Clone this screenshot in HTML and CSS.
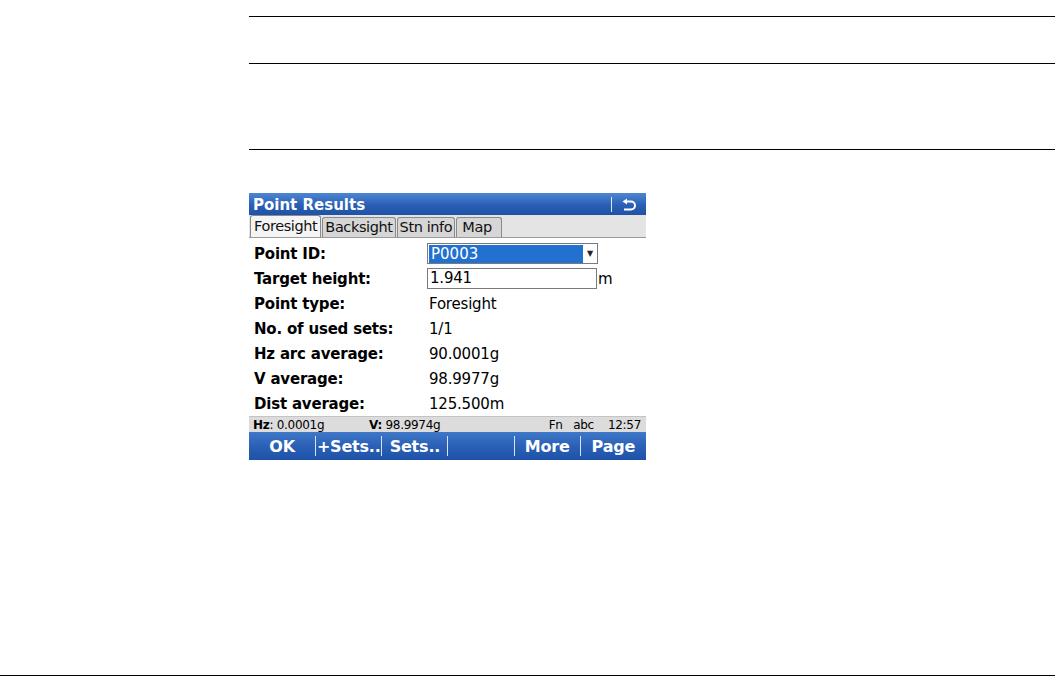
FILE: index.html
```html
<!DOCTYPE html>
<html>
<head>
<meta charset="utf-8">
<link rel="stylesheet" href="styles.css">
</head>
<body>
<div class="page">
  <div class="rule rule-a"></div>
  <div class="rule rule-b"></div>
  <div class="rule rule-c"></div>
  <div class="screen">
    <div class="titlebar">
      <span class="title">Point Results</span>
      <span class="tsep"></span>
      <svg class="back" width="16" height="14" viewBox="0 0 16 14">
        <path d="M5 3.5 H10 A4 4 0 0 1 10 11.5 H3" fill="none" stroke="#fff" stroke-width="2"/>
        <path d="M1.5 3.5 L6 0.5 L6 6.5 Z" fill="#fff"/>
      </svg>
    </div>
    <div class="tabs">
      <div class="tab active">Foresight</div>
      <div class="tab">Backsight</div>
      <div class="tab">Stn info</div>
      <div class="tab tab-map">Map</div>
    </div>
    <div class="content">
      <div class="row"><span class="lbl">Point ID:</span>
        <div class="select"><span class="selval">P0003</span><span class="arrow">&#9660;</span></div></div>
      <div class="row"><span class="lbl">Target height:</span>
        <div class="input">1.941</div><span class="unit">m</span></div>
      <div class="row"><span class="lbl">Point type:</span><span class="val">Foresight</span></div>
      <div class="row"><span class="lbl">No. of used sets:</span><span class="val">1/1</span></div>
      <div class="row"><span class="lbl">Hz arc average:</span><span class="val">90.0001g</span></div>
      <div class="row"><span class="lbl">V average:</span><span class="val">98.9977g</span></div>
      <div class="row"><span class="lbl">Dist average:</span><span class="val">125.500m</span></div>
    </div>
    <div class="status">
      <span class="st-hz"><b>Hz</b>: 0.0001g</span>
      <span class="st-v"><b>V:</b> 98.9974g</span>
      <span class="st-right">Fn&nbsp;&nbsp; abc&nbsp;&nbsp;&nbsp; 12:57</span>
    </div>
    <div class="softkeys">
      <div class="key">OK</div>
      <div class="key">+Sets..</div>
      <div class="key">Sets..</div>
      <div class="key"></div>
      <div class="key">More</div>
      <div class="key">Page</div>
    </div>
  </div>
  <div class="footer-rule"></div>
</div>
</body>
</html>
```
FILE: styles.css
```css
html, body {
  margin: 0;
  padding: 0;
  background: #fff;
}
.page {
  height: 676px;
  display: flex;
  flex-direction: column;
  font-family: "DejaVu Sans", sans-serif;
}
.rule {
  margin-left: 249px;
  height: 1px;
  background: #000;
}
.rule-a { margin-top: 16px; }
.rule-b { margin-top: 46px; }
.rule-c { margin-top: 85px; }
.screen {
  margin-top: 43px;
  margin-left: 249px;
  width: 397px;
  display: flex;
  flex-direction: column;
}
.titlebar {
  height: 22px;
  background: linear-gradient(#4f86d3, #2a5fb4 55%, #1f52a6);
  display: flex;
  align-items: center;
  padding-left: 4px;
  padding-top: 1px;
  box-sizing: border-box;
  color: #fff;
}
.title {
  font-weight: bold;
  font-size: 15px;
  letter-spacing: 0;
  flex: 1;
}
.tsep {
  width: 1px;
  height: 15px;
  background: #dfe8f6;
  margin-right: 9px;
}
.back {
  margin-right: 9px;
}
.tabs {
  height: 23px;
  background: #e4e4e4;
  display: flex;
  align-items: flex-end;
  padding-left: 1px;
  border-bottom: 1px solid #9a9a9a;
  box-sizing: border-box;
}
.tab {
  height: 19px;
  font-size: 14.5px;
  letter-spacing: -0.4px;
  line-height: 19px;
  padding: 0 2px;
  background: #d6d6d6;
  border: 1px solid #8a8a8a;
  border-bottom: none;
  border-radius: 3px 3px 0 0;
  margin-right: 1px;
  color: #111;
}
.tab.active {
  background: #f4f4f4;
  height: 21px;
  line-height: 21px;
  padding: 0 3px;
}
.tab-map {
  padding: 0 9px 0 5px;
}
.content {
  background: #fff;
  padding-top: 3px;
}
.row {
  height: 25px;
  display: flex;
  align-items: center;
  font-size: 15px;
  color: #000;
}
.lbl {
  width: 175px;
  padding-left: 5px;
  font-weight: bold;
  font-size: 15px;
  letter-spacing: -0.2px;
}
.val {
  padding-left: 0;
  letter-spacing: -0.2px;
}
.select {
  width: 169px;
  height: 19px;
  margin-left: -2px;
  border: 1px solid #7a7a7a;
  display: flex;
  align-items: stretch;
  background: #fff;
}
.selval {
  flex: 1;
  background: #2270cf;
  color: #fff;
  padding-left: 2px;
  line-height: 19px;
  margin: 1px 0 0 1px;
}
.arrow {
  width: 14px;
  font-size: 8px;
  line-height: 19px;
  text-align: center;
  color: #222;
}
.input {
  width: 166px;
  height: 19px;
  margin-left: -2px;
  border: 1px solid #7a7a7a;
  padding-left: 2px;
  line-height: 19px;
  letter-spacing: -0.2px;
}
.unit {
  padding-left: 1px;
}
.status {
  height: 16px;
  background: #dcdcdc;
  border-top: 1px solid #c4c4c4;
  box-sizing: border-box;
  font-size: 12px;
  letter-spacing: -0.3px;
  display: flex;
  align-items: center;
  color: #000;
}
.st-hz {
  padding-left: 4px;
  width: 116px;
}
.st-v {
  flex: 1;
}
.st-right {
  padding-right: 5px;
}
.softkeys {
  height: 28px;
  background: linear-gradient(#3f78c8, #2a60b6 50%, #1d52a8);
  display: grid;
  grid-template-columns: repeat(6, 1fr);
  align-items: center;
}
.key {
  color: #fff;
  font-weight: bold;
  font-size: 16px;
  letter-spacing: -0.2px;
  text-align: center;
  height: 20px;
  line-height: 21px;
  border-left: 1px solid #d8e4f6;
}
.key:first-child {
  border-left: none;
}
.footer-rule {
  margin-top: auto;
  margin-bottom: 0px;
  height: 1px;
  background: #000;
}
```
